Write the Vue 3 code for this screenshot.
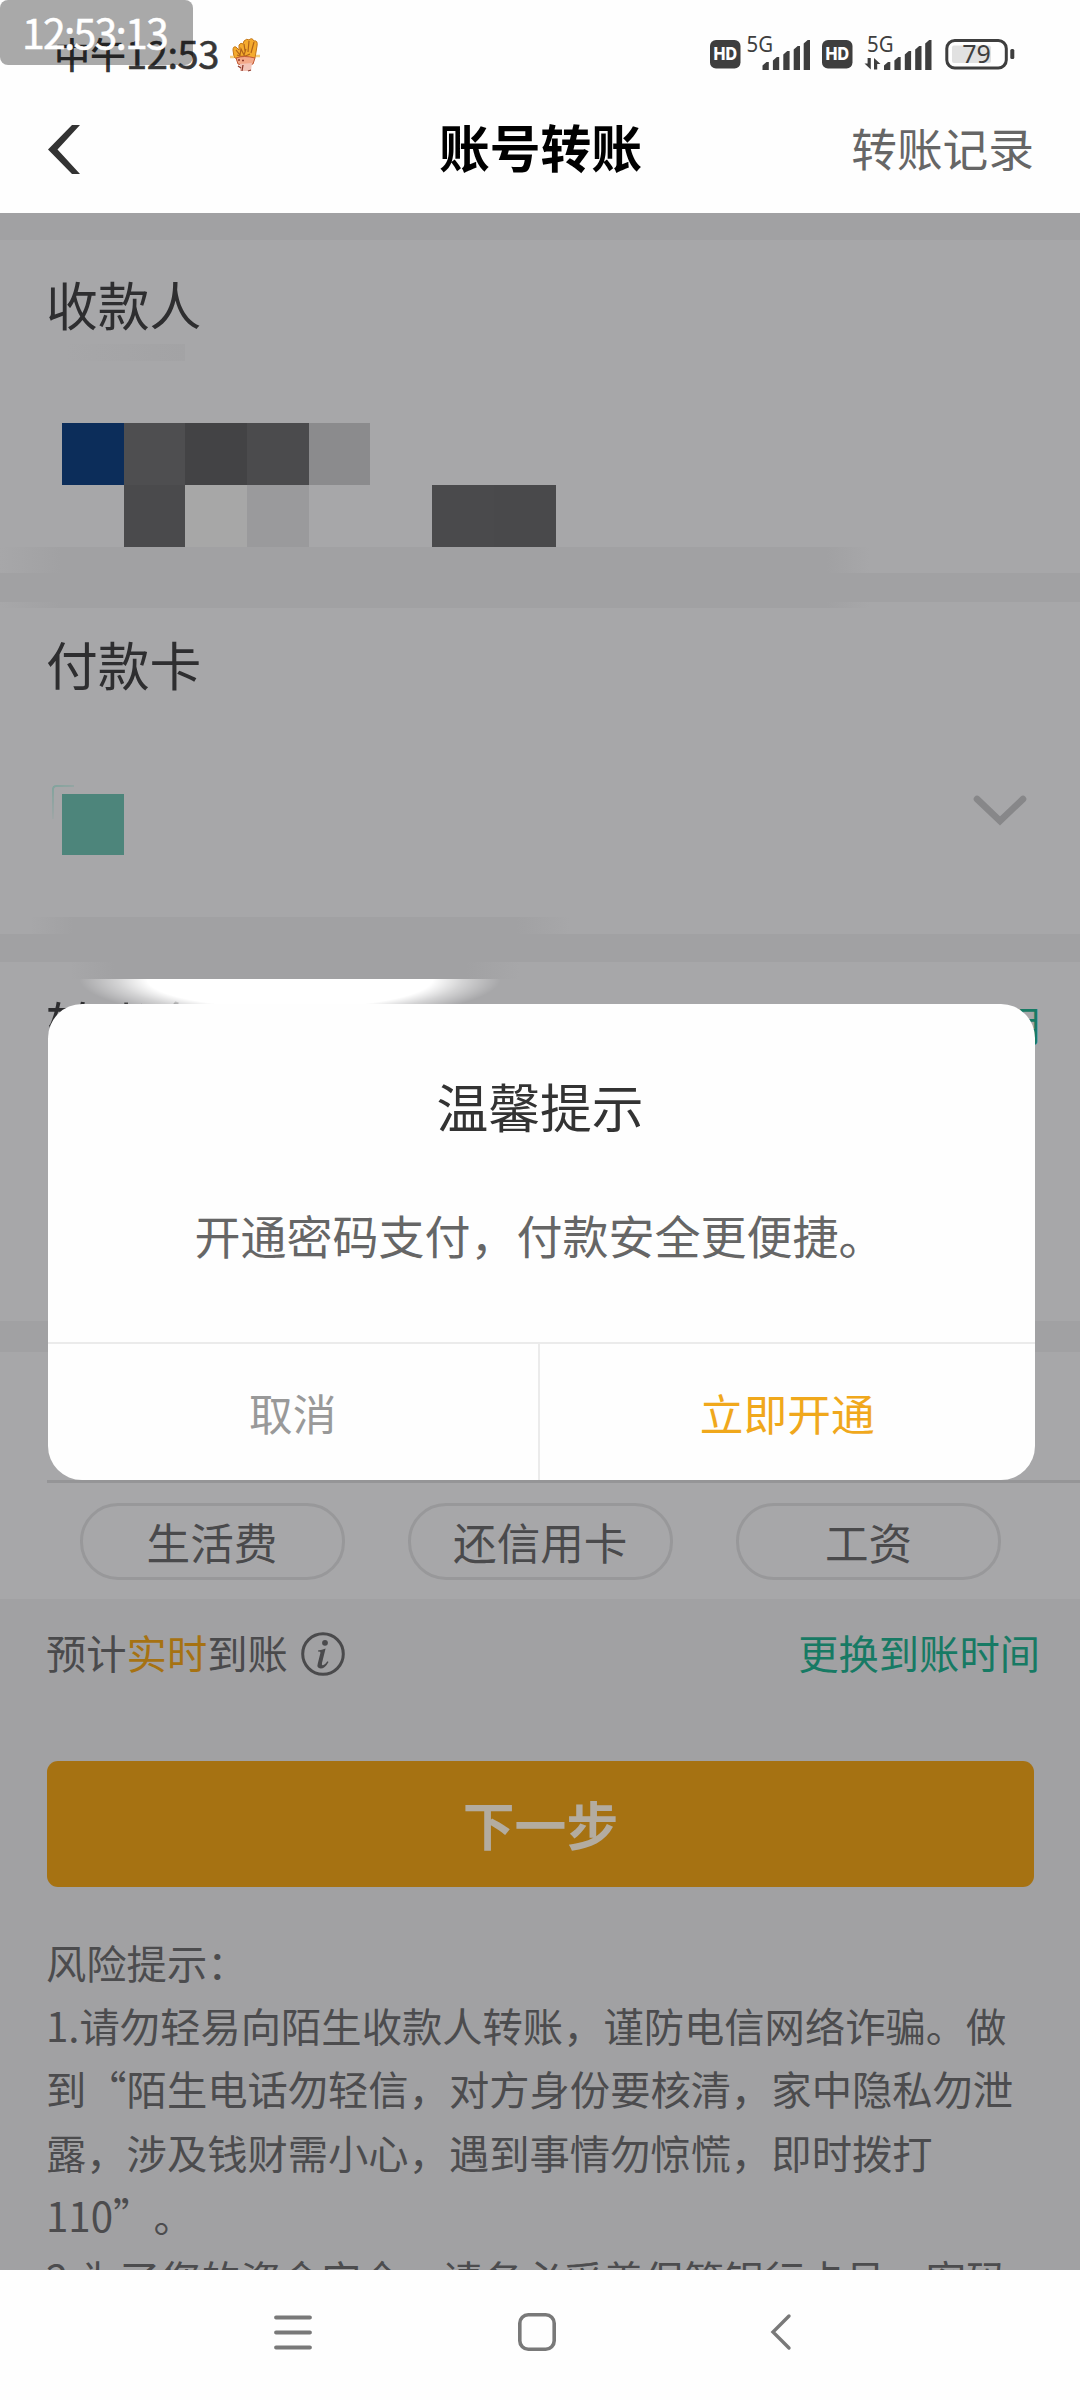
<script setup>
const mosaic = [
  '#0c2d5a', '#4e4e50', '#434345', '#4b4b4d', '#8b8b8d', 'transparent', 'transparent', 'transparent',
  'transparent', '#4a4a4c', '#a7a7a7', '#9a9a9c', 'transparent', 'transparent', '#4a4a4c', '#49494b',
]
const bars = [
  { x: 0, y: 22 },
  { x: 10.4, y: 17 },
  { x: 20.8, y: 11 },
  { x: 31.2, y: 6 },
  { x: 41.2, y: 0 },
]
const tags = ['生活费', '还信用卡', '工资']
const risks = [
  '1.请勿轻易向陌生收款人转账，谨防电信网络诈骗。做',
  '到“陌生电话勿轻信，对方身份要核清，家中隐私勿泄',
  '露，涉及钱财需小心，遇到事情勿惊慌，即时拨打',
  '110”。',
  '2.为了您的资金安全，请务必妥善保管银行卡号、密码',
]
</script>

<template>
  <div class="phone" lang="zh-CN">
    <header class="top">
      <div class="status">
        <div class="clock">
          <span class="clock-text">中午<i>12:53</i></span>
          <svg class="hand" width="30" height="34" viewBox="0 0 30 34">
            <path d="M4 19 L3 12 Q3 8 6 9 L9 12 L9 7 Q11 4 13 6 L14 3 Q17 0 19 2 Q22 -1 24 3 Q28 2 27 8 L25 20 Q20 24 7 21 Z" fill="#f5ab2e" stroke="#c47718" stroke-width="1" />
            <path d="M6 12 L10 17 L11 11 L14 17 L16 11 M14 6 L15 13 M19 3 L18 14 M24 4 L21 15 M7 17 Q13 20 20 16" fill="none" stroke="#b0641a" stroke-width="1.2" />
            <path d="M6 20 Q14 17 25 20 L23 26 Q15 29 8 26 Z" fill="#f3a98a" stroke="#c25a34" stroke-width="1" />
            <path d="M10 26 L22 25 L21 33 L10 33 Z" fill="#f2c4b8" />
            <path d="M8 22 h2 M12 22.5 h2 M8 28 L11 30 M12 33 L13 27 M18 33 L21 32" stroke="#8d3a2c" stroke-width="1.3" />
            <path d="M0 19 h4 M26 18 h4" stroke="#f5cf82" stroke-width="2.4" />
          </svg>
        </div>
        <svg class="signals" width="306" height="38" viewBox="710 34 306 38">
          <g v-for="bx in [711, 823]" :key="bx">
            <rect :x="bx" y="40" width="30.5" height="28.5" rx="6" fill="#3e3e3e" />
            <text :x="bx + 15.2" y="60" class="hd" textLength="23.5" lengthAdjust="spacingAndGlyphs">HD</text>
          </g>
          <text x="747.5" y="51.5" class="g5" textLength="26.5" lengthAdjust="spacingAndGlyphs">5G</text>
          <text x="868" y="51.5" class="g5" textLength="26.5" lengthAdjust="spacingAndGlyphs">5G</text>
          <g v-for="sx in [763.5, 885]" :key="sx" fill="#3e3e3e">
            <path
              v-for="b in bars"
              :key="b.x"
              :d="`M${sx + b.x} 70 V${40 + b.y + 3.5} L${sx + b.x + 4} ${40 + b.y} H${sx + b.x + 6.3} V70 Z`"
            />
          </g>
          <path d="M871.8 58 V69.5 L865.5 63.5 H868.6 V58 Z M875 69.5 V58 L881.5 64 H878.2 V69.5 Z" fill="#3e3e3e" />
          <rect x="947.8" y="40.5" width="59.5" height="27.5" rx="8" fill="none" stroke="#3e3e3e" stroke-width="3" />
          <rect x="953" y="45.5" width="39" height="17.5" rx="2" fill="#e1e1e1" />
          <rect x="1011.3" y="49" width="4" height="10" rx="1.5" fill="#3e3e3e" />
          <text x="977.5" y="63" class="pct">79</text>
        </svg>
      </div>
      <div class="nav">
        <svg width="34" height="50" viewBox="0 0 34 50">
          <path d="M24 0 H32 L9.5 24.5 L32 49 H24 L0 24.5 Z" fill="#333" />
        </svg>
        <h1>账号转账</h1>
        <span class="history">转账记录</span>
      </div>
      <div class="stamp">12:53:13</div>
    </header>

    <main class="body">
      <section class="card payee">
        <h2>收款人</h2>
        <div class="mosaic">
          <i v-for="(c, i) in mosaic" :key="i" :style="{ background: c }"></i>
        </div>
        <span class="smudge s0"></span>
        <span class="smudge s1"></span>
      </section>
      <section class="card payer">
        <h2>付款卡</h2>
        <div class="payer-row">
          <span class="bank"></span>
          <svg width="54" height="34" viewBox="0 0 54 34">
            <path d="M4 5 L27 27 L50 5" fill="none" stroke="#878789" stroke-width="6.6" stroke-linecap="round" />
          </svg>
        </div>
        <span class="smudge s2"></span>
        <span class="smudge s3"></span>
      </section>
      <section class="card amount">
        <h2>转账金额</h2>
        <span class="limit">限额说明</span>
        <span class="glow"></span>
      </section>
      <section class="card remark">
        <div class="tags">
          <span v-for="t in tags" :key="t" class="tag">{{ t }}</span>
        </div>
      </section>

      <div class="arrival">
        <span>预计<b>实时</b>到账</span>
        <svg width="44" height="44" viewBox="0 0 44 44">
          <circle cx="22" cy="22" r="20.3" fill="none" stroke="#4a4a4c" stroke-width="3" />
          <circle cx="24" cy="10.8" r="2.9" fill="#4a4a4c" />
          <path d="M17 18.5 Q21 18 24.6 16.4 L21 31 Q20.4 34 22.5 33 Q24.5 32 26.5 29.2 L27.5 30 Q24 36.6 19.6 36.6 Q15.4 36 16.8 31.5 L19.4 21 Q20 19.4 17 19.6 Z" fill="#4a4a4c" />
        </svg>
        <a>更换到账时间</a>
      </div>
      <button class="next">下一步</button>
      <div class="risk">
        <p>风险提示：</p>
        <p v-for="r in risks" :key="r">{{ r }}</p>
      </div>

      <div class="dialog">
        <h3>温馨提示</h3>
        <p>开通密码支付，付款安全更便捷。</p>
        <div class="actions">
          <span class="cancel">取消</span>
          <span class="ok">立即开通</span>
        </div>
      </div>
    </main>

    <footer class="sysnav">
      <svg width="38" height="40" viewBox="0 0 38 40">
        <path d="M2 5.5 H36 M2 20.5 H36 M2 35.5 H36" stroke="#797979" stroke-width="3.8" stroke-linecap="round" />
      </svg>
      <svg width="38" height="40" viewBox="0 0 38 40">
        <rect x="1.8" y="2.8" width="34.4" height="34.4" rx="8.5" fill="none" stroke="#797979" stroke-width="3.6" />
      </svg>
      <svg width="22" height="40" viewBox="0 0 22 40">
        <path d="M19 4 L3 20 L19 36" fill="none" stroke="#797979" stroke-width="3.4" stroke-linecap="round" />
      </svg>
    </footer>
  </div>
</template>

<style>
body { margin: 0; background: #fff; }
</style>

<style scoped>
.phone {
  width: 1080px;
  height: 2400px;
  display: flex;
  flex-direction: column;
  overflow: hidden;
  background: #fefefe;
  font-family: "Noto Sans CJK SC", "Noto Sans", sans-serif;
  text-spacing-trim: space-all;
}
h1, h2, h3, p { margin: 0; font-weight: 400; }
i { font-style: normal; }

.top { position: relative; height: 213px; flex: none; }
.status {
  height: 88px;
  box-sizing: border-box;
  padding: 34px 65px 0 54px;
  display: flex;
  justify-content: space-between;
}
.clock { display: flex; height: 38px; }
.clock-text {
  width: 176px;
  font-size: 36px;
  line-height: 38px;
  font-weight: 500;
  color: #363636;
  white-space: nowrap;
}
.clock-text i { font-size: 38px; font-weight: 400; letter-spacing: -0.4px; -webkit-text-stroke: 0.6px #363636; }
.hand { margin-top: 4px; }
.signals { overflow: visible; }
.hd { font: 800 17px "Inter", sans-serif; fill: #fff; text-anchor: middle; }
.g5 { font: 400 21.5px "Noto Sans", sans-serif; fill: #3e3e3e; }
.pct { font: 400 25px "Noto Sans", sans-serif; fill: #3e3e3e; text-anchor: middle; }
.stamp {
  position: absolute;
  left: 0;
  top: 0;
  width: 193px;
  height: 65px;
  border-radius: 8px;
  background: rgba(0, 0, 0, 0.335);
  color: #fff;
  font-size: 41px;
  line-height: 62px;
  letter-spacing: -1.8px;
  text-indent: 22px;
  -webkit-text-stroke: 0.5px #fff;
  white-space: nowrap;
}
.nav {
  height: 125px;
  box-sizing: border-box;
  padding: 0 46px 0 48px;
  display: grid;
  grid-template-columns: 1fr auto 1fr;
  align-items: center;
}
.nav svg { display: block; margin-top: -1px; }
.nav h1 { font-size: 50.8px; line-height: 60px; font-weight: 700; color: #000; margin: -9px 0 0 -1px; }
.history { justify-self: end; font-size: 45.7px; line-height: 60px; margin-top: -7px; color: #666; }

.body {
  position: relative;
  height: 2057px;
  flex: none;
  overflow: hidden;
  box-sizing: border-box;
  padding-top: 27px;
  background: #a1a1a3;
}
.card { position: relative; background: #a7a7a9; box-sizing: border-box; margin-bottom: 28px; }
.card h2 { font-size: 51.8px; line-height: 60px; color: #2e2e30; padding-left: 46px; }
.payee { height: 333px; padding-top: 34px; margin-bottom: 29px; }
.mosaic {
  position: relative;
  z-index: 1;
  display: grid;
  grid-template-columns: repeat(8, 61.7px);
  grid-auto-rows: 62px;
  margin: 89px 0 0 62px;
}
.smudge { position: absolute; background: #a1a1a3; }
.s0 { left: 65px; top: 104px; width: 120px; height: 17px; background: linear-gradient(90deg, #a7a7a9, #a3a3a5); }
.s1 {
  left: 0;
  top: 307px;
  width: 870px;
  height: 61px;
  z-index: 1;
  background: linear-gradient(90deg, rgba(161, 161, 163, 0), #a1a1a3 7%, #a1a1a3 95%, rgba(161, 161, 163, 0));
}
.payer { height: 332px; padding-top: 32px; }
.payer-row {
  display: flex;
  justify-content: space-between;
  align-items: flex-start;
  padding: 100px 53px 0 62px;
}
.bank {
  position: relative;
  width: 62px;
  height: 61px;
  background: #4d857b;
}
.bank::before {
  content: "";
  position: absolute;
  left: -10px;
  top: -9px;
  width: 22px;
  height: 34px;
  border-left: 2px solid #7fa39c;
  border-top: 2px solid #7fa39c;
  border-top-left-radius: 4px;
  box-sizing: border-box;
  -webkit-mask-image: linear-gradient(135deg, #000, transparent 75%);
  mask-image: linear-gradient(135deg, #000, transparent 75%);
}
.s2 {
  left: 30px;
  top: 315px;
  width: 540px;
  height: 18px;
  background: linear-gradient(90deg, rgba(161, 161, 163, 0), #a1a1a3 8%, #a1a1a3 90%, rgba(161, 161, 163, 0));
}
.s3 {
  left: 70px;
  top: 359px;
  width: 450px;
  height: 18px;
  z-index: 1;
  background: linear-gradient(90deg, rgba(161, 161, 163, 0), #a1a1a3 10%, #a1a1a3 88%, rgba(161, 161, 163, 0));
}
.amount {
  height: 359px;
  margin-bottom: 31px;
  display: flex;
  justify-content: space-between;
  padding: 32px 40px 0 0;
}
.limit { font-size: 40.25px; line-height: 60px; color: #177a64; }
.glow {
  position: absolute;
  left: 70px;
  top: 17px;
  width: 440px;
  height: 30px;
  background: radial-gradient(ellipse 188px 38px at 220px 0, #fff 76%, rgba(255, 255, 255, 0.5) 92%, rgba(255, 255, 255, 0) 112%);
}
.remark { height: 247px; margin-bottom: 0; display: flex; flex-direction: column; padding-top: 128px; }
.tags {
  margin-left: 47px;
  border-top: 3px solid #959597;
  padding: 20px 79px 0 32.5px;
  display: flex;
  justify-content: space-between;
}
.tag {
  width: 265px;
  height: 77px;
  box-sizing: border-box;
  border: 3px solid #98989a;
  border-radius: 38px;
  text-align: center;
  font-size: 43.6px;
  line-height: 70px;
  color: #4a4a4c;
}
.arrival {
  height: 109px;
  padding: 0 40px 0 46px;
  display: flex;
  align-items: center;
  font-size: 40.3px;
  line-height: 60px;
  color: #4a4a4c;
}
.arrival span, .arrival a { margin-top: -4px; }
.arrival b { font-weight: 400; color: #a67212; }
.arrival svg { margin-left: 13px; }
.arrival a { margin-left: auto; color: #177a64; }
.next {
  display: block;
  width: 987px;
  height: 126px;
  margin: 53px 0 0 47px;
  padding: 0 0 1px;
  border: 0;
  border-radius: 11px;
  background: #a67212;
  color: #b3aca0;
  font: 700 51.8px "Noto Sans CJK SC", sans-serif;
}
.risk { margin: 43px 0 0 46px; font-size: 40.3px; line-height: 63.2px; color: #4c4c4e; white-space: nowrap; }

.dialog {
  position: absolute;
  left: 47.5px;
  top: 791px;
  z-index: 3;
  width: 987px;
  height: 476px;
  border-radius: 34px;
  background: #fefefe;
  display: flex;
  flex-direction: column;
  text-align: center;
}
.dialog h3 { margin: 70px 2px 0 0; font-size: 51.8px; line-height: 64px; color: #333; }
.dialog p { margin: 66px 3px 0 0; font-size: 46px; line-height: 60px; color: #666; }
.actions { margin-top: auto; height: 136px; border-top: 2px solid #ebebeb; display: flex; font-size: 43.7px; line-height: 136px; }
.cancel { width: 490.5px; border-right: 2px solid #ebebeb; color: #999; }
.ok { flex: 1; color: #f0a81c; }

.sysnav { position: relative; height: 130px; flex: none; background: #fefefe; display: flex; align-items: flex-start; padding: 42px 0 0 273.5px; }
.sysnav svg:nth-child(2) { margin-left: 206.5px; }
.sysnav svg:nth-child(3) { margin-left: 214px; }
</style>
